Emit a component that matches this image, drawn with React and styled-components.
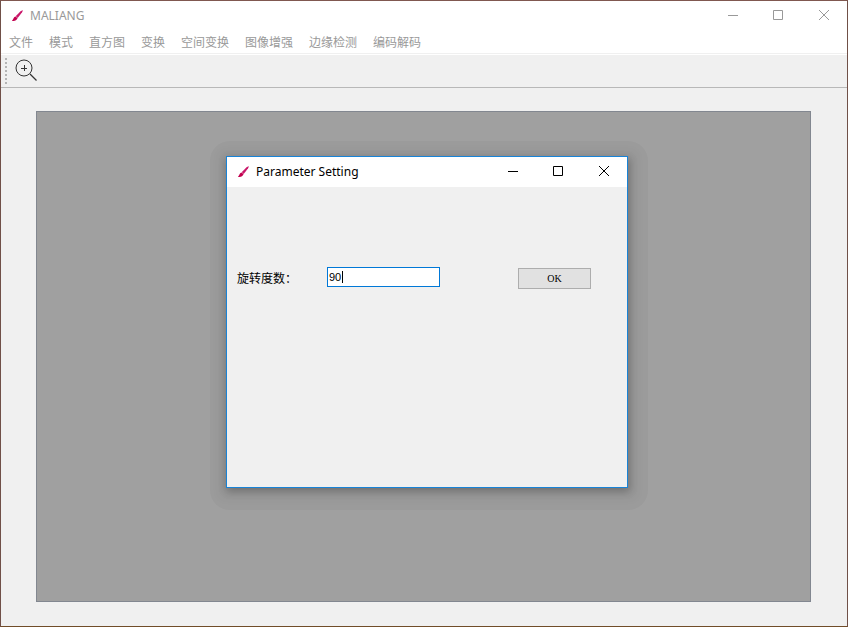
import React, { useState } from "react";
import styled, { createGlobalStyle } from "styled-components";

const GlobalStyle = createGlobalStyle`
  * { box-sizing: border-box; }
  body { margin: 0; font-family: "Noto Sans", "Noto Sans CJK SC", sans-serif; font-size: 12px; }
  button, input { font: inherit; margin: 0; }
`;

const Window = styled.div`
  position: relative;
  display: flex;
  flex-direction: column;
  min-height: 100vh;
  border: 1px solid;
  border-color: #805850 #705048 #704c28 #705048;
  background: #f0f0f0;
`;

const TitleBar = styled.header`
  display: flex;
  align-items: center;
  height: 30px;
  padding-left: 10px;
  background: #fff;
  color: ${(p) => (p.$active ? "#000" : "#999")};
`;

const Title = styled.h1`
  flex: 1;
  margin: 0 0 0 6px;
  font-size: 12px;
  font-weight: 400;
  line-height: 16px;
`;

const CaptionButton = styled.button`
  display: grid;
  place-items: center;
  align-self: flex-start;
  width: ${(p) => p.$width}px;
  height: 28px;
  padding: 0;
  border: 0;
  background: transparent;
  color: inherit;
`;

const MenuBar = styled.nav`
  display: flex;
  height: 23px;
  background: #fff;
  border-bottom: 1px solid #f0f0f0;
`;

const MenuButton = styled.button`
  padding: 2px 8px 0;
  border: 0;
  background: transparent;
  color: #999;
  line-height: 20px;
  white-space: nowrap;
`;

const ToolBar = styled.div`
  display: flex;
  align-items: flex-start;
  height: 34px;
  padding: 3px 4px;
  gap: 5px;
  border-top: 1px solid #fff;
  border-bottom: 1px solid #b8b8b8;
`;

const Grip = styled.span`
  width: 2px;
  height: 26px;
  background: repeating-linear-gradient(#b4b4b4 0 2px, transparent 2px 4px);
`;

const ToolButton = styled.button`
  width: 26px;
  height: 24px;
  padding: 0;
  border: 0;
  background: transparent;
  line-height: 0;
`;

const Canvas = styled.main`
  flex: 1;
  margin: 23px 36px 24px 35px;
  border: 1px solid #828790;
  background: #a0a0a0;
`;

const DialogShade = styled.div`
  position: absolute;
  left: 209px;
  top: 140px;
  padding: 15px 20px 22px 16px;
  border-radius: 20px;
  background: rgba(0, 0, 0, 0.03);
`;

const Dialog = styled.section`
  width: 402px;
  min-height: 332px;
  border: 1px solid #1883d7;
  background: #f0f0f0;
  color: #000;
  box-shadow:
    1px 3px 8px rgba(0, 0, 0, 0.24),
    1px 3px 10px 6px rgba(0, 0, 0, 0.06);
`;

const Form = styled.form`
  display: grid;
  grid-template-columns: 90px 113px 1fr;
  align-items: start;
  padding: 80px 36px 0 10px;
`;

const Label = styled.label`
  line-height: 24px;
`;

const Field = styled.div`
  position: relative;
`;

const Input = styled.input`
  display: block;
  width: 100%;
  height: 20px;
  padding: 0 1px;
  border: 1px solid #0078d7;
  border-radius: 0;
  outline: 0;
  background: #fff;
  color: #000;
  font-family: "Liberation Sans", sans-serif;
  font-size: 11px;
`;

const Caret = styled.span`
  position: absolute;
  left: 15px;
  top: 4px;
  width: 1px;
  height: 12px;
  background: #000;
`;

const OkButton = styled.button`
  justify-self: end;
  width: 73px;
  height: 21px;
  margin-top: 1px;
  padding: 0;
  border: 1px solid #adadad;
  background: #e1e1e1;
  color: #000;
  font-family: "Liberation Serif", serif;
  font-size: 10px;
  line-height: 20px;
`;

const Brush = () => (
  <svg width="13" height="14" viewBox="0 0 13 14" aria-hidden="true">
    <path d="M12 1.2 9.8 2 4.7 7.3l2 1.7L11.1 3.2Z" fill="#c9176a" />
    <path d="M4.5 7.5c-1.8.2-1.8 2.5-3.6 4.3 2.2.7 5-.1 5.6-2.8Z" fill="#c2004f" />
    <path d="m5 7.5 1.6 1.4" stroke="#d85a92" />
  </svg>
);

const Magnifier = () => (
  <svg width="24" height="24" viewBox="0 0 24 24" fill="none" stroke="#333" aria-hidden="true">
    <circle cx="11" cy="10" r="8" />
    <path d="M8 10.5h6M11.5 7v6" />
    <path d="m17 16 6.5 6.5" strokeWidth="1.3" />
  </svg>
);

const glyphs = {
  Minimize: "M0 5.5h10",
  Maximize: "M.5.5h9v9h-9Z",
  Close: "m0 0 10 10M10 0 0 10",
};

const Caption = ({ name, width }) => (
  <CaptionButton type="button" aria-label={name} $width={width}>
    <svg width="10" height="10" viewBox="0 0 10 10" fill="none" stroke="currentColor">
      <path d={glyphs[name]} />
    </svg>
  </CaptionButton>
);

const CaptionButtons = () => (
  <>
    <Caption name="Minimize" width={44} />
    <Caption name="Maximize" width={46} />
    <Caption name="Close" width={46} />
  </>
);

const menus = ["文件", "模式", "直方图", "变换", "空间变换", "图像增强", "边缘检测", "编码解码"];

export default function App() {
  const [angle, setAngle] = useState("90");
  return (
    <>
      <GlobalStyle />
      <Window>
        <TitleBar>
          <Brush />
          <Title>MALIANG</Title>
          <CaptionButtons />
        </TitleBar>
        <MenuBar>
          {menus.map((m) => (
            <MenuButton type="button" key={m}>{m}</MenuButton>
          ))}
        </MenuBar>
        <ToolBar>
          <Grip />
          <ToolButton type="button" aria-label="Zoom in">
            <Magnifier />
          </ToolButton>
        </ToolBar>
        <Canvas />
        <DialogShade>
          <Dialog role="dialog" aria-labelledby="dialog-title">
            <TitleBar $active>
              <Brush />
              <Title as="h2" id="dialog-title">Parameter Setting</Title>
              <CaptionButtons />
            </TitleBar>
            <Form onSubmit={(e) => e.preventDefault()}>
              <Label htmlFor="angle">旋转度数：</Label>
              <Field>
                <Input id="angle" value={angle} onChange={(e) => setAngle(e.target.value)} />
                <Caret />
              </Field>
              <OkButton type="submit">OK</OkButton>
            </Form>
          </Dialog>
        </DialogShade>
      </Window>
    </>
  );
}
